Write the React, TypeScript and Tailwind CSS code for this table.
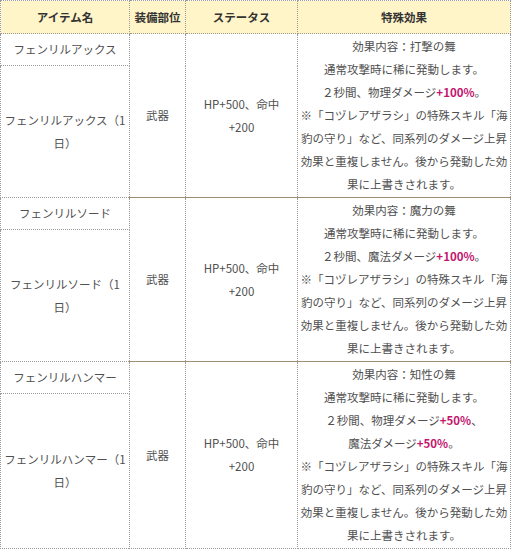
import React from "react";

type Item = {
	name: string;
	daily: string[];
	effect: React.ReactNode[];
};

const Hl: React.FC<{ children: React.ReactNode }> = ({ children }) => (
	<span className="font-bold text-[#c4156e]">{children}</span>
);

const items: Item[] = [
	{
		name: "フェンリルアックス",
		daily: ["フェンリルアックス（1", "日）"],
		effect: [
			"効果内容：打撃の舞",
			"通常攻撃時に稀に発動します。",
			<>
				２秒間、物理ダメージ<Hl>+100%</Hl>。
			</>,
			"※「コヅレアザラシ」の特殊スキル「海",
			"豹の守り」など、同系列のダメージ上昇",
			"効果と重複しません。後から発動した効",
			"果に上書きされます。",
		],
	},
	{
		name: "フェンリルソード",
		daily: ["フェンリルソード（1", "日）"],
		effect: [
			"効果内容：魔力の舞",
			"通常攻撃時に稀に発動します。",
			<>
				２秒間、魔法ダメージ<Hl>+100%</Hl>。
			</>,
			"※「コヅレアザラシ」の特殊スキル「海",
			"豹の守り」など、同系列のダメージ上昇",
			"効果と重複しません。後から発動した効",
			"果に上書きされます。",
		],
	},
	{
		name: "フェンリルハンマー",
		daily: ["フェンリルハンマー（1", "日）"],
		effect: [
			"効果内容：知性の舞",
			"通常攻撃時に稀に発動します。",
			<>
				２秒間、物理ダメージ<Hl>+50%</Hl>、
			</>,
			<>
				魔法ダメージ<Hl>+50%</Hl>。
			</>,
			"※「コヅレアザラシ」の特殊スキル「海",
			"豹の守り」など、同系列のダメージ上昇",
			"効果と重複しません。後から発動した効",
			"果に上書きされます。",
		],
	},
];

const cell = "border border-dotted border-[#9a9a9a] text-center align-middle";
const groupTop = { borderTopStyle: "solid", borderTopColor: "#a08e74" } as const;

export default function App() {
	return (
		<div
			className="bg-white text-[11.5px] leading-[23px] text-[#505050]"
			style={{ fontFamily: '"Noto Sans CJK JP", "Noto Sans", sans-serif' }}>
			<table className="table-fixed border-collapse w-[511px]">
				<colgroup>
					<col className="w-[129px]" />
					<col className="w-[56px]" />
					<col className="w-[112px]" />
					<col />
				</colgroup>
				<thead>
					<tr className="h-[33px] bg-[#fff5c8] font-bold text-[#333]">
						<th className={cell}>アイテム名</th>
						<th className={cell}>装備部位</th>
						<th className={cell}>ステータス</th>
						<th className={cell}>特殊効果</th>
					</tr>
				</thead>
				<tbody>
					{items.map((item, i) => (
						<React.Fragment key={item.name}>
							<tr className="h-[32px]">
								<td className={cell}>{item.name}</td>
								<td rowSpan={2} className={cell} style={i > 0 ? groupTop : undefined}>
									武器
								</td>
								<td rowSpan={2} className={cell} style={i > 0 ? groupTop : undefined}>
									<div>HP+500、命中</div>
									<div>+200</div>
								</td>
								<td
									rowSpan={2}
									className={`${cell} py-px`}
									style={i > 0 ? groupTop : undefined}>
									{item.effect.map((line, j) => (
										<div key={j} className="whitespace-nowrap">
											{line}
										</div>
									))}
								</td>
							</tr>
							<tr>
								<td className={cell}>
									{item.daily.map(l => (
										<div key={l}>{l}</div>
									))}
								</td>
							</tr>
						</React.Fragment>
					))}
				</tbody>
			</table>
		</div>
	);
}
